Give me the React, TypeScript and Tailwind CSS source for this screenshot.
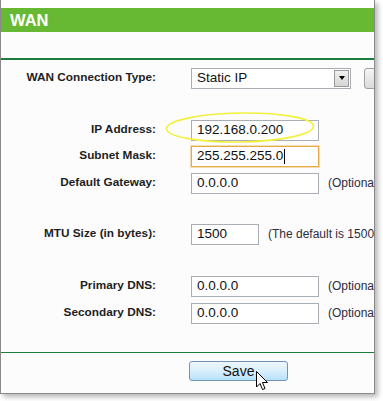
import React from 'react';

const font = { fontFamily: '"Liberation Sans", Arial, sans-serif' };

function Label({ children }: { children: React.ReactNode }) {
  return (
    <div className="w-[155px] shrink-0 text-right text-[11.8px] font-bold text-[#1e1e1e]">
      {children}
    </div>
  );
}

function TextBox({
  value,
  width = 'w-[128px]',
  focused = false,
}: {
  value: string;
  width?: string;
  focused?: boolean;
}) {
  return (
    <div
      className={
        focused
          ? `${width} ml-[35px] flex h-[21px] shrink-0 items-center border border-[#e3a94a] bg-white pl-[5px] text-[13.5px] text-[#111] shadow-[0_0_0_1px_rgba(240,200,120,0.6)]`
          : `${width} ml-[35px] flex h-[21px] shrink-0 items-center border border-[#a9aeb4] bg-white pl-[5px] text-[13.5px] text-[#111]`
      }
    >
      {value}
      {focused && <span className="ml-px inline-block h-[15px] w-px bg-black" />}
    </div>
  );
}

function Hint({ children, ml = 'ml-[9px]' }: { children: React.ReactNode; ml?: string }) {
  return <div className={`${ml} shrink-0 whitespace-nowrap text-[12px] text-[#2c2c3c]`}>{children}</div>;
}

export default function App() {
  return (
    <div className="relative h-[401px] w-[383px] overflow-hidden bg-white" style={font}>
      <div className="h-[394px] w-[375px] overflow-hidden border-r border-b border-l border-[#8a8a8a] bg-[#fcfcfc] shadow-[3px_3px_5px_rgba(0,0,0,0.28)]">
        <div className="h-[8px] bg-white" />
        <div className="flex h-[24px] items-center bg-[#67b934] pl-[9px] text-[16.5px] font-bold text-white">
          WAN
        </div>
        <div className="h-[26px]" />
        <div className="h-[1.5px] bg-[#1c7d3d]" />

        <div className="mt-[8px] flex items-center">
          <Label>WAN Connection Type:</Label>
          <div className="ml-[35px] flex h-[21px] w-[160px] shrink-0 items-center border border-[#a9aeb4] bg-white">
            <div className="flex-1 pl-[5px] text-[13.5px] text-[#111]">Static IP</div>
            <div className="mr-px flex h-[17px] w-[15px] items-center justify-center border border-[#9a9a9a] bg-gradient-to-b from-[#f0f0f0] to-[#d6d6d6]">
              <div className="h-0 w-0 border-t-[4px] border-r-[3.5px] border-l-[3.5px] border-t-black border-r-transparent border-l-transparent" />
            </div>
          </div>
          <div className="ml-[13px] h-[21px] w-[30px] shrink-0 rounded-[3px] border border-[#a0a0a0] bg-gradient-to-b from-[#f6f6f6] to-[#d9d9d9]" />
        </div>

        <div className="mt-[31px] flex items-center">
          <Label>IP Address:</Label>
          <TextBox value="192.168.0.200" />
        </div>
        <div className="mt-[5px] flex items-center">
          <Label>Subnet Mask:</Label>
          <TextBox value="255.255.255.0" focused />
        </div>
        <div className="mt-[6px] flex items-center">
          <Label>Default Gateway:</Label>
          <TextBox value="0.0.0.0" />
          <Hint>(Optional)</Hint>
        </div>

        <div className="mt-[30px] flex items-center">
          <Label>MTU Size (in bytes):</Label>
          <TextBox value="1500" width="w-[68px]" />
          <Hint>(The default is 1500, do not change unless necessary.)</Hint>
        </div>

        <div className="mt-[31px] flex items-center">
          <Label>Primary DNS:</Label>
          <TextBox value="0.0.0.0" />
          <Hint>(Optional)</Hint>
        </div>
        <div className="mt-[6px] flex items-center">
          <Label>Secondary DNS:</Label>
          <TextBox value="0.0.0.0" />
          <Hint>(Optional)</Hint>
        </div>

        <div className="mt-[28px] h-[1.5px] bg-[#1c7d3d]" />

        <div className="mt-[8px] flex pl-[188px]">
          <div className="flex h-[20px] w-[99px] items-center justify-center rounded-[3px] border border-[#6f94b6] bg-gradient-to-b from-[#eef7fd] via-[#d9effc] to-[#b6e0fa] text-[14px] text-[#111]">
            Save
          </div>
        </div>
      </div>

      <svg className="pointer-events-none absolute top-[111px] left-[164px]" width="152" height="34" viewBox="0 0 152 34">
        <ellipse cx="76" cy="16.5" rx="73.5" ry="14.5" fill="none" stroke="#f3f03c" strokeWidth="1.6" transform="rotate(-1 76 16.5)" />
      </svg>

      <svg className="pointer-events-none absolute top-[371px] left-[256px]" width="13" height="20" viewBox="0 0 13 20">
        <path d="M0.5 0.5 L0.5 16 L4 12.5 L6.5 18.5 L9 17.5 L6.5 11.5 L11.5 11.5 Z" fill="white" stroke="black" strokeWidth="1" strokeLinejoin="round" />
      </svg>
    </div>
  );
}
